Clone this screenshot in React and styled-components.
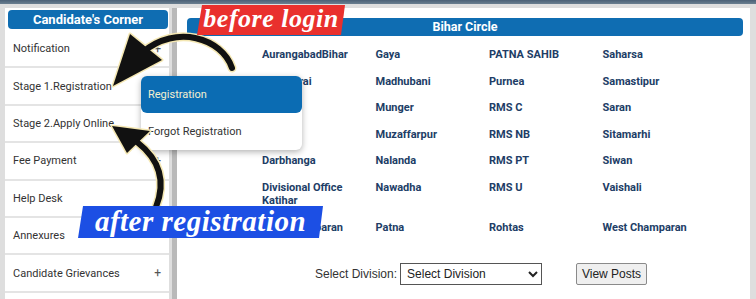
import React from 'react';
import styled, { createGlobalStyle } from 'styled-components';

const GlobalStyle = createGlobalStyle`
  html, body {
    margin: 0;
    padding: 0;
    background: #dedede;
    font-family: Roboto, "Liberation Sans", Arial, sans-serif;
  }
`;

const sideItems = [
  { label: 'Notification', plus: true },
  { label: 'Stage 1.Registration', plus: false },
  { label: 'Stage 2.Apply Online', plus: false },
  { label: 'Fee Payment', plus: true },
  { label: 'Help Desk', plus: false },
  { label: 'Annexures', plus: false },
  { label: 'Candidate Grievances', plus: true },
];

const divisions = [
  'AurangabadBihar', 'Gaya', 'PATNA SAHIB', 'Saharsa',
  'Begusarai', 'Madhubani', 'Purnea', 'Samastipur',
  'Bhojpur', 'Munger', 'RMS C', 'Saran',
  'Buxar', 'Muzaffarpur', 'RMS NB', 'Sitamarhi',
  'Darbhanga', 'Nalanda', 'RMS PT', 'Siwan',
  'Divisional Office Katihar', 'Nawadha', 'RMS U', 'Vaishali',
  'East Champaran', 'Patna', 'Rohtas', 'West Champaran',
];

const App = () => {
  return (
    <Page>
      <GlobalStyle />
      <TopBar />
      <Layout>
        <Sidebar>
          <SideHeader>Candidate's Corner</SideHeader>
          {sideItems.map((item) => (
            <SideRow key={item.label}>
              <span>{item.label}</span>
              {item.plus && <Plus>+</Plus>}
            </SideRow>
          ))}
        </Sidebar>
        <Main>
          <CircleBar>Bihar Circle</CircleBar>
          <DivisionGrid>
            {divisions.map((d) => (
              <DivisionLink key={d}>{d}</DivisionLink>
            ))}
          </DivisionGrid>
          <Controls>
            <SelectLabel>Select Division:</SelectLabel>
            <DivisionSelect defaultValue="">
              <option value="">Select Division</option>
            </DivisionSelect>
            <ViewButton>View Posts</ViewButton>
          </Controls>
        </Main>
      </Layout>

      <Popup>
        <PopupItem active>Registration</PopupItem>
        <PopupItem>Forgot Registration</PopupItem>
      </Popup>

      <Arrows width="756" height="299" viewBox="0 0 756 299">
        <g fill="none" stroke="#f4e7b2" strokeWidth="9" strokeLinecap="round">
          <path d="M232 68 C222 38 176 24 143 52" />
          <path d="M156 207 C166 182 160 160 137 142" />
        </g>
        <g fill="#f4e7b2" stroke="#f4e7b2" strokeWidth="3" strokeLinejoin="round">
          <polygon points="113,86 130,34 162,60" />
          <polygon points="112,126 150,131 127,153" />
        </g>
        <g fill="none" stroke="#111" strokeWidth="6" strokeLinecap="round">
          <path d="M232 68 C222 38 176 24 143 52" />
          <path d="M156 207 C166 182 160 160 137 142" />
        </g>
        <g fill="#111">
          <polygon points="113,86 130,34 162,60" />
          <polygon points="112,126 150,131 127,153" />
        </g>
      </Arrows>

      <Tag tone="red" style={{ left: 197, top: 5, width: 148, height: 30 }}>
        before login
      </Tag>
      <Tag tone="blue" style={{ left: 78, top: 206, width: 245, height: 32 }}>
        after registration
      </Tag>
    </Page>
  );
};

export default App;

const Page = styled.div`
  position: relative;
  width: 756px;
  height: 299px;
  overflow: hidden;
  background: #dedede;
`;

const TopBar = styled.div`
  height: 4px;
  background: linear-gradient(#4a6076, #6a7f90);
`;

const Layout = styled.div`
  display: flex;
  padding-top: 4px;
  padding-left: 5px;
  height: 291px;
`;

const Sidebar = styled.div`
  width: 164px;
  background: #ffffff;
  display: flex;
  flex-direction: column;
  padding-top: 2px;
`;

const SideHeader = styled.div`
  margin: 0 1px 2px 3px;
  height: 19px;
  border-radius: 4px;
  background: #0f6db2;
  color: #ffffff;
  font-weight: 700;
  font-size: 13px;
  line-height: 19px;
  text-align: center;
`;

const SideRow = styled.div`
  height: 35.4px;
  flex-shrink: 0;
  border-bottom: 2px solid #e4e4e4;
  display: flex;
  align-items: center;
  justify-content: space-between;
  padding: 0 8px 0 8px;
  font-size: 11px;
  color: #333333;
`;

const Plus = styled.span`
  font-size: 12px;
  color: #555555;
`;

const Main = styled.div`
  flex: 1;
  margin-left: 3px;
  border-left: 5px solid #b9b9b9;
  margin-right: 6px;
  background: #ffffff;
  padding-top: 10px;
`;

const CircleBar = styled.div`
  margin: 0 7px 0 10px;
  height: 18px;
  border-radius: 4px;
  background: #0f6db2;
  color: #ffffff;
  font-weight: 700;
  font-size: 12.5px;
  line-height: 18px;
  text-align: center;
`;

const DivisionGrid = styled.div`
  display: grid;
  grid-template-columns: repeat(4, 113.5px);
  row-gap: 13px;
  margin-top: 12px;
  padding-left: 85px;
`;

const DivisionLink = styled.div`
  font-size: 11px;
  font-weight: 700;
  line-height: 13.5px;
  color: #213d66;
  padding-right: 22px;
`;

const Controls = styled.div`
  display: flex;
  align-items: center;
  margin-top: 29px;
  padding-left: 138px;
  font-family: "Liberation Sans", Arial, sans-serif;
`;

const SelectLabel = styled.span`
  font-size: 12px;
  color: #333333;
  margin-right: 3px;
`;

const DivisionSelect = styled.select`
  width: 142px;
  height: 22px;
  border: 1px solid #555555;
  border-radius: 0;
  background: #ffffff;
  font-family: "Liberation Sans", Arial, sans-serif;
  font-size: 12px;
  color: #222222;
  padding: 0 2px;
`;

const ViewButton = styled.button`
  margin-left: 34px;
  width: 71px;
  height: 22px;
  border: 1px solid #8a8a8a;
  border-radius: 2px;
  background: #efefef;
  font-family: "Liberation Sans", Arial, sans-serif;
  font-size: 12px;
  color: #222222;
  padding: 0;
`;

const Popup = styled.div`
  position: absolute;
  left: 141px;
  top: 76px;
  width: 161px;
  background: #ffffff;
  border-radius: 6px;
  box-shadow: 0 2px 6px rgba(0, 0, 0, 0.3);
`;

const PopupItem = styled.div`
  height: 37px;
  display: flex;
  align-items: center;
  padding-left: 7px;
  font-size: 11px;
  border-radius: 6px;
  background: ${(p) => (p.active ? '#0b6cb3' : 'transparent')};
  color: ${(p) => (p.active ? '#f4f0cf' : '#333333')};
`;

const Arrows = styled.svg`
  position: absolute;
  left: 0;
  top: 0;
  pointer-events: none;
`;

const Tag = styled.div`
  position: absolute;
  display: flex;
  align-items: center;
  justify-content: center;
  background: ${(p) => (p.tone === 'red' ? '#e9302d' : '#1c4fe4')};
  clip-path: polygon(5px 0, 100% 0, calc(100% - 4px) 100%, 0 100%);
  color: #ffffff;
  font-family: "Liberation Serif", "Times New Roman", serif;
  font-style: italic;
  font-weight: 700;
  font-size: ${(p) => (p.tone === 'red' ? '26px' : '29px')};
  letter-spacing: 0.5px;
  line-height: 1;
  padding-bottom: 2px;
  box-sizing: border-box;
`;
